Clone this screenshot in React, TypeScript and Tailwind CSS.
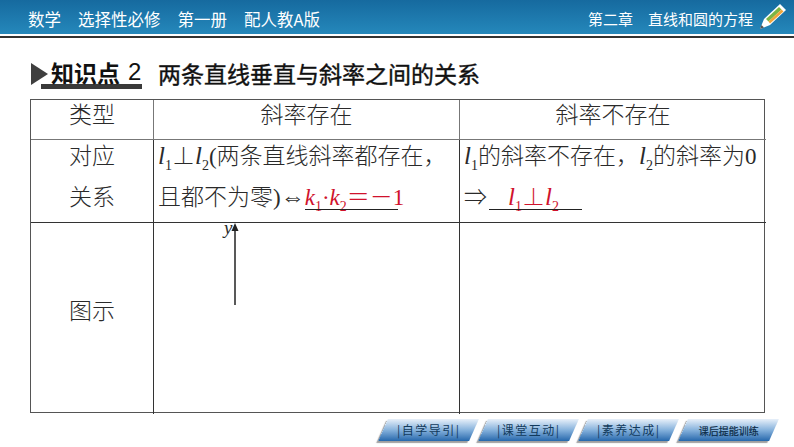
import React from 'react';

const cjk = "font-['Liberation_Serif','Noto_Sans_CJK_SC',serif]";
const hei = "font-['Noto_Sans_CJK_SC',sans-serif]";

function Sub({ children }: { children: React.ReactNode }) {
  return <sub className="text-[14px] not-italic leading-none align-[-2px]">{children}</sub>;
}

function Ell() {
  return <i className="text-[25px] leading-none">l</i>;
}

function NavButton({ label, plain }: { label: string; plain?: boolean }) {
  return (
    <div className="h-[22px] w-[91px] -skew-x-[24deg] bg-gradient-to-b from-[#e8f0f9] via-[#86b2dc] to-[#2468ac] shadow-[-1px_2px_1px_#a0a0a0] flex items-center justify-center">
      <span className={`skew-x-[24deg] ${hei} ${plain ? 'text-[10px] text-[#0c2c48] [-webkit-text-stroke:0.2px_#0c2c48]' : 'text-[12px] tracking-[1.5px] text-[#123a5c]'}`}>
        {label}
      </span>
    </div>
  );
}

export default function App() {
  return (
    <div className="w-[794px] h-[447px] bg-white overflow-hidden flex flex-col">
      <header className={`h-[34px] bg-gradient-to-b from-[#166a9f] to-[#2588bb] flex items-center justify-between pl-[28px] pr-[7px] text-white ${hei}`}>
        <div className="flex gap-[17px] mt-[4px] text-[16.500px]">
          <span>数学</span>
          <span>选择性必修</span>
          <span>第一册</span>
          <span>配人教A版</span>
        </div>
        <div className="flex items-center text-[15px]">
          <div className="flex gap-[15px] mt-[4px]">
            <span>第二章</span>
            <span>直线和圆的方程</span>
          </div>
          <svg width="28" height="30" viewBox="0 0 28 30" className="ml-[6px] -mt-[2px]">
            <path d="M1 28 L5 18 L21 3 L27 9 L11 24 Z" fill="#ffffff" />
            <path d="M7 18 L20 6 L22.500 8.500 L9.500 20.500 Z" fill="#7db544" />
            <path d="M9.500 20.500 L22.500 8.500 L24.500 10.500 L11 22.500 Z" fill="#f0a63a" />
            <path d="M1 28 L2.500 24 L5 26.500 Z" fill="#555555" />
          </svg>
        </div>
      </header>
      <div className="h-[2px] bg-white" />
      <div className="h-[2px] bg-[#333333]" />

      <div className="h-[61px] pl-[31px] pt-[20px] flex items-start">
        <svg width="19" height="22" viewBox="0 0 19 22" className="mt-[5px] shrink-0">
          <path d="M0 0 L17 11 L0 22 Z" fill="#3f3f3f" />
        </svg>
        <div className="border-b-[5px] border-[#3a3a3a] h-[31px] -ml-[9px] pl-[10px] w-[101px] flex items-start">
          <span className={`text-[23px] leading-[28px] font-bold text-[#111] ${hei} whitespace-nowrap`}>知识点</span>
          <span className="ml-[8px] text-[24px] leading-[28px] text-[#111] font-['Liberation_Sans',sans-serif]">2</span>
        </div>
        <span className={`ml-[16px] text-[23px] leading-[30px] text-[#111] ${hei} [-webkit-text-stroke:0.4px_#111] whitespace-nowrap`}>两条直线垂直与斜率之间的关系</span>
      </div>

      <div className={`ml-[30px] w-[735px] h-[314px] grid grid-cols-[123px_306px_306px] grid-rows-[40px_83px_191px] border border-[#555555] text-[#2a2a2a] text-[23px] font-light ${cjk}`}>
        <div className="border-r border-b border-[#777] flex items-center justify-center pb-[6px]">类型</div>
        <div className="border-r border-b border-[#777] flex items-center justify-center pb-[6px]">斜率存在</div>
        <div className="border-b border-[#777] flex items-center justify-center pb-[6px]">斜率不存在</div>

        <div className="border-r border-b border-[#333]">
          <div className="flex flex-col items-center -mt-[4px] leading-[41px]">
            <span>对应</span>
            <span>关系</span>
          </div>
        </div>
        <div className="border-r border-b border-[#333] pl-[4px] whitespace-nowrap">
          <div className="-mt-[4px] leading-[41px]">
            <div>
              <Ell /><Sub>1</Sub>⊥<Ell /><Sub>2</Sub>(两条直线斜率都存在，
            </div>
            <div className="flex">
              <span>且都不为零)</span>
              <span className="font-['DejaVu_Sans',sans-serif] text-[24px] leading-[41px]">⇔</span>
              <span className="relative text-[#d0122c]">
                <i>k</i><Sub>1</Sub>·<i>k</i><Sub>2</Sub>＝－1
                <span className="absolute left-0 w-[93px] bottom-[8px] border-b border-[#222]" />
              </span>
            </div>
          </div>
        </div>
        <div className="border-b border-[#333] pl-[4px] whitespace-nowrap">
          <div className="-mt-[4px] leading-[41px]">
            <div>
              <Ell /><Sub>1</Sub>的斜率不存在，<Ell /><Sub>2</Sub>的斜率为0
            </div>
            <div className="flex">
              <span>⇒</span>
              <span className="relative ml-[2px] w-[93px] pl-[19px] text-[#d0122c]">
                <Ell /><Sub>1</Sub>⊥<Ell /><Sub>2</Sub>
                <span className="absolute left-0 w-[93px] bottom-[8px] border-b border-[#222]" />
              </span>
            </div>
          </div>
        </div>

        <div className="border-r border-[#333] flex items-center justify-center pb-[13px]">图示</div>
        <div className="relative border-r border-[#333]">
          <i className="absolute left-[70px] -top-[7px] text-[19px] leading-[24px]">y</i>
          <svg width="12" height="82" viewBox="0 0 12 82" className="absolute left-[75px] top-0">
            <path d="M6 4 V82" stroke="#222" strokeWidth="1.500" />
            <path d="M6 0 L9.500 8 L2.500 8 Z" fill="#222" />
          </svg>
        </div>
        <div />
      </div>

      <nav className="flex gap-[9px] pl-[383px] mt-[6px]">
        <NavButton label="|自学导引|" />
        <NavButton label="|课堂互动|" />
        <NavButton label="|素养达成|" />
        <NavButton label="课后提能训练" plain />
      </nav>
    </div>
  );
}
